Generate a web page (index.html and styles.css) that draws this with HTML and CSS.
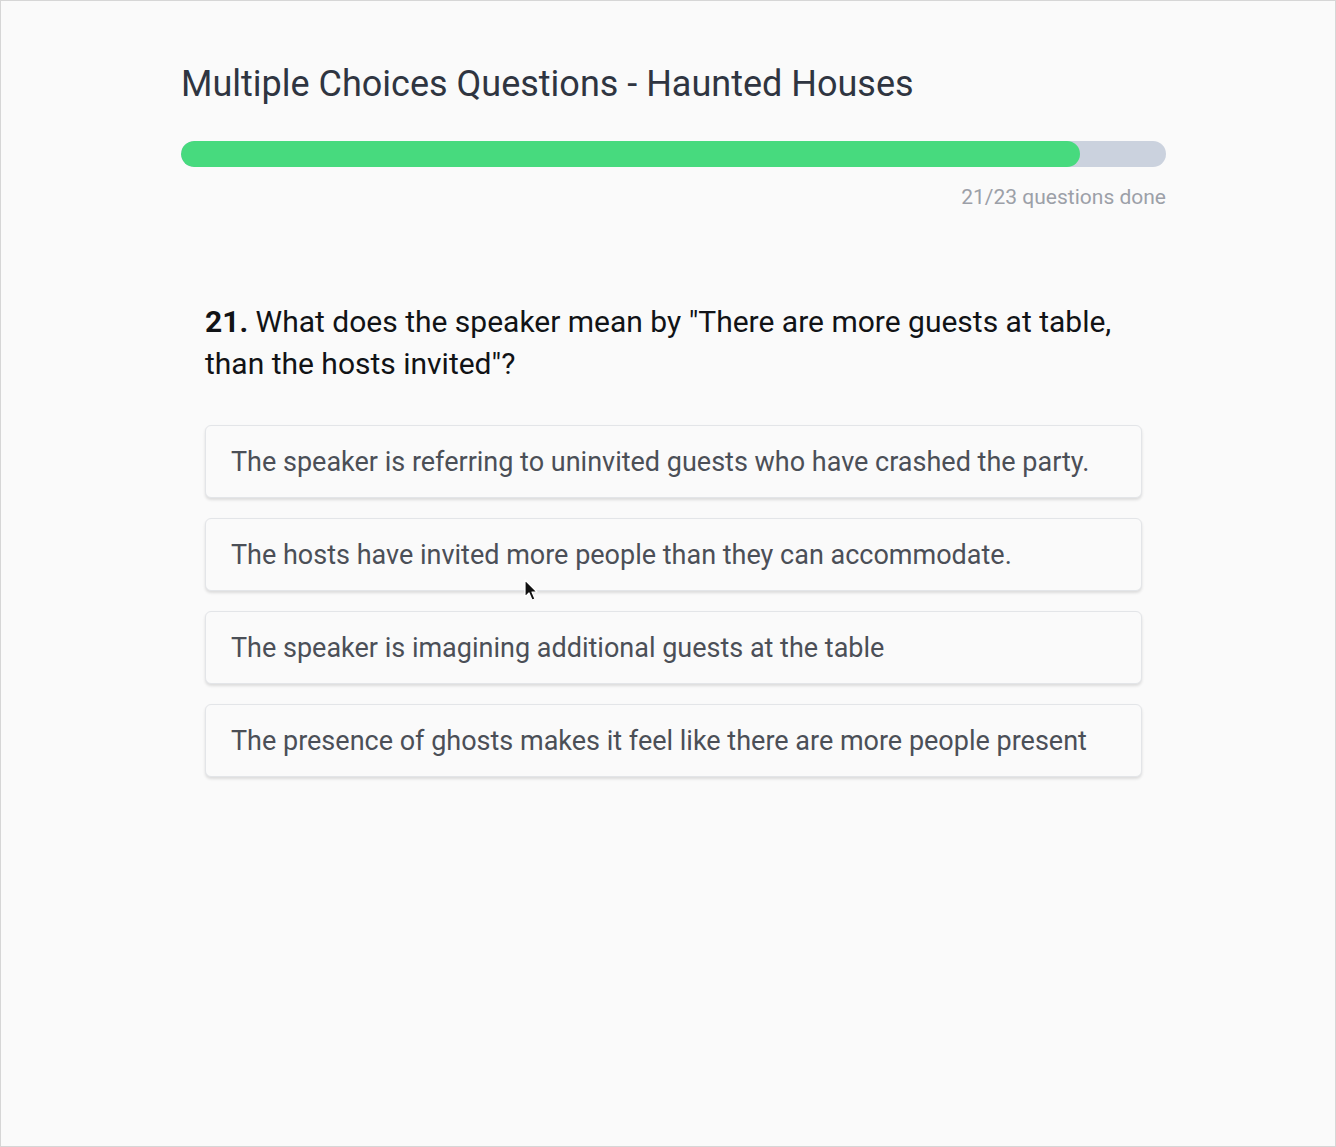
FILE: index.html
```html
<!DOCTYPE html>
<html lang="en">
  <head>
    <meta charset="UTF-8" />
    <meta name="viewport" content="width=device-width, initial-scale=1.0" />
    <title>Multiple Choices Questions - Haunted Houses</title>
    <link rel="stylesheet" href="styles.css">
  </head>
  <body>
    <div class="frame">
      <div class="container">
        <h1 class="title">Multiple Choices Questions - Haunted Houses</h1>
        <div class="progress">
          <div class="progress-fill" style="width: 91.3%"></div>
        </div>
        <div class="progress-label">21/23 questions done</div>

        <div class="question">
          <p class="question-text"><strong>21.</strong> What does the speaker mean by "There are more guests at table, than the hosts invited"?</p>
          <div class="options">
            <div class="option">The speaker is referring to uninvited guests who have crashed the party.</div>
            <div class="option">The hosts have invited more people than they can accommodate.</div>
            <div class="option">The speaker is imagining additional guests at the table</div>
            <div class="option">The presence of ghosts makes it feel like there are more people present</div>
          </div>
        </div>
      </div>
      <!-- mouse cursor -->
      <svg class="cursor" width="16" height="24" viewBox="0 0 16 24">
        <path d="M1 1 L1 18 L5 14 L8 21 L11 20 L8 13 L13 13 Z" fill="#111" stroke="#fff" stroke-width="1.2" stroke-linejoin="round" />
      </svg>
    </div>
  </body>
</html>
```

FILE: styles.css
```css
body {
  margin: 0;
  font-family: Roboto, "Liberation Sans", Arial, sans-serif;
  background-color: #ffffff;
}
.frame {
  position: relative;
  box-sizing: border-box;
  height: 1147px;
  border: 1px solid #d6d6d6;
  background-color: #fafafa;
}
.container {
  width: 985px;
  margin-left: 180px;
  padding-top: 60px;
}
.title {
  margin: 0;
  font-size: 36px;
  font-weight: 400;
  line-height: 46px;
  color: #2f3541;
}
.progress {
  margin-top: 34px;
  height: 26px;
  border-radius: 13px;
  background-color: #cbd2de;
  overflow: hidden;
}
.progress-fill {
  height: 100%;
  border-radius: 13px;
  background-color: #47da7e;
}
.progress-label {
  margin-top: 18px;
  text-align: right;
  font-size: 21px;
  color: #9ca0a8;
}
.question {
  padding: 92px 24px 0;
}
.question-text {
  margin: 0;
  font-size: 30px;
  line-height: 42px;
  color: #111316;
}
.question-text strong {
  font-weight: 700;
}
.options {
  display: flex;
  flex-direction: column;
  gap: 20px;
  margin-top: 40px;
}
.option {
  padding: 21px 25px 19px;
  border: 1px solid #e3e5e8;
  border-radius: 6px;
  background-color: #fafafa;
  box-shadow: 0 2px 3px rgba(0, 0, 0, 0.12);
  font-size: 27px;
  line-height: 31px;
  color: #4b4f57;
}
.cursor {
  position: absolute;
  left: 523px;
  top: 578px;
}
```
